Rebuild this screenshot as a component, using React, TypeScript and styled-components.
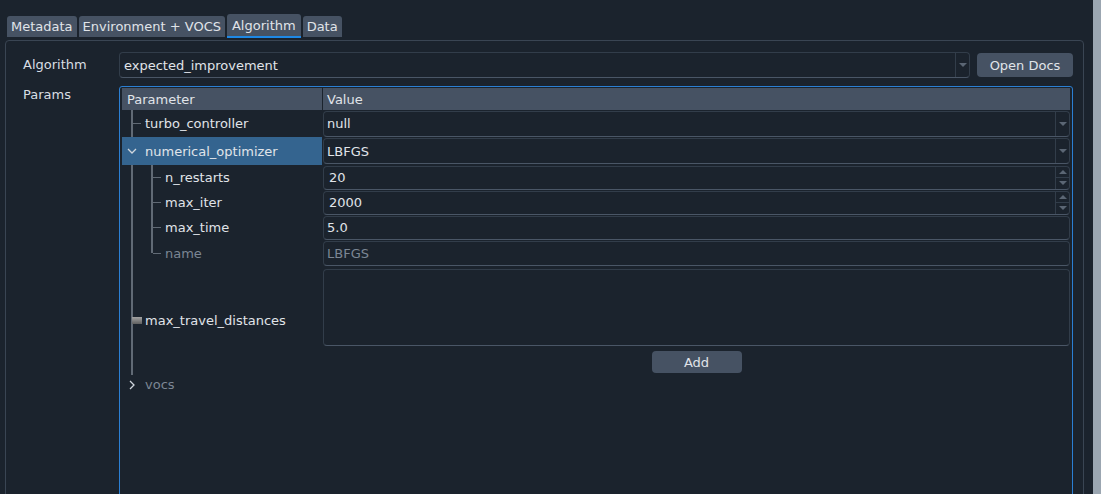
import React from "react";
import styled, { createGlobalStyle, css } from "styled-components";

const bg = "#1b232d";
const text = "#e0e4e9";
const muted = "#7b8694";
const panel = "#465263";
const edge = "#323d4a";
const edgeLow = "#4a5666";
const branch = "#616a75";

const GlobalStyle = createGlobalStyle`
  html, body {
    margin: 0;
    padding: 0;
    overflow: hidden;
    background: ${bg};
  }
  body {
    font-family: "DejaVu Sans", "Liberation Sans", sans-serif;
    font-size: 13px;
    color: ${text};
  }
`;

const Window = styled.div`
  display: flex;
  width: 1101px;
  height: 494px;
  overflow: hidden;
`;

const Main = styled.div`
  flex: 1;
  min-width: 0;
  display: flex;
  flex-direction: column;
  padding: 14px 0 0 5px;
`;

const ScrollStrip = styled.div`
  flex: 0 0 8px;
  background: #9ba6b1;
`;

const TabBar = styled.div`
  display: flex;
  flex-shrink: 0;
  align-items: flex-end;
  gap: 2px;
  height: 26px;
  padding-left: 2px;
`;

const Tab = styled.div<{ $active?: boolean }>`
  display: flex;
  align-items: center;
  padding: 0 4px;
  background: ${panel};
  border-radius: 3px 3px 0 0;
  color: ${text};
  box-sizing: border-box;
  height: 21px;
  margin-bottom: 3px;
  ${({ $active }) =>
    $active &&
    css`
      height: 24px;
      margin-bottom: 2px;
      padding: 0 5px;
      border-bottom: 2px solid #1e88e5;
    `}
`;

const GroupBox = styled.div`
  flex-shrink: 0;
  width: 1079px;
  height: 500px;
  box-sizing: border-box;
  border: 1px solid #3a4553;
  border-radius: 4px;
  padding: 11px 10px 10px 17px;
  display: grid;
  grid-template-columns: 96px 1fr;
  grid-template-rows: 26px 1fr;
  row-gap: 8px;
`;

const FormLabel = styled.div<{ $top?: boolean }>`
  color: #d9dee4;
  line-height: 16px;
  align-self: ${({ $top }) => ($top ? "start" : "center")};
  padding-top: ${({ $top }) => ($top ? 1 : 0)}px;
`;

const AlgorithmRow = styled.div`
  display: flex;
  align-items: center;
  gap: 7px;
`;

const Field = styled.div<{ $h?: number; $grow?: boolean }>`
  box-sizing: border-box;
  flex-shrink: 0;
  height: ${({ $h }) => $h ?? 24}px;
  ${({ $grow }) => $grow && "flex: 1;"}
  border: 1px solid ${edge};
  border-bottom-color: ${edgeLow};
  border-radius: 4px;
  background: ${bg};
  display: flex;
  align-items: center;
`;

const FieldText = styled.span<{ $muted?: boolean; $pad?: number }>`
  flex: 1;
  padding-left: ${({ $pad }) => $pad ?? 3}px;
  color: ${({ $muted }) => ($muted ? muted : text)};
  white-space: nowrap;
`;

const DropButton = styled.span`
  align-self: stretch;
  width: 13px;
  border-left: 1px solid ${edge};
  display: flex;
  align-items: center;
  justify-content: center;
`;

const SpinButtons = styled.span`
  align-self: stretch;
  width: 13px;
  border-left: 1px solid ${edge};
  display: flex;
  flex-direction: column;
`;

const SpinHalf = styled.span`
  flex: 1;
  display: flex;
  align-items: center;
  justify-content: center;
  & + & {
    border-top: 1px solid ${edge};
  }
`;

const Arrow = styled.span<{ $up?: boolean }>`
  width: 0;
  height: 0;
  border-left: 4px solid transparent;
  border-right: 4px solid transparent;
  ${({ $up }) =>
    $up
      ? css`border-bottom: 4px solid #5b6674;`
      : css`border-top: 4px solid #5b6674;`}
`;

const Button = styled.button<{ $w: number; $h: number }>`
  flex-shrink: 0;
  width: ${({ $w }) => $w}px;
  height: ${({ $h }) => $h}px;
  border: none;
  border-radius: 4px;
  background: ${panel};
  color: ${text};
  font: inherit;
  padding: 0;
`;

const Tree = styled.div`
  box-sizing: border-box;
  border: 1px solid #2b7fd3;
  border-radius: 3px;
  padding: 1px 2px 0 2px;
  min-height: 0;
`;

const Header = styled.div`
  display: grid;
  grid-template-columns: 200px 1fr;
  height: 22px;
  background: ${panel};
`;

const HeaderCell = styled.div`
  display: flex;
  align-items: center;
  padding-left: 5px;
  & + & {
    border-left: 1px solid ${bg};
    padding-left: 4px;
  }
`;

const Row = styled.div<{ $h: number }>`
  display: grid;
  grid-template-columns: 200px 1fr;
  height: ${({ $h }) => $h}px;
`;

const ParamCell = styled.div<{ $selected?: boolean }>`
  display: flex;
  align-items: stretch;
  background: ${({ $selected }) => ($selected ? "#34648f" : "transparent")};
`;

const ParamName = styled.span<{ $muted?: boolean }>`
  align-self: center;
  padding-left: 3px;
  color: ${({ $muted }) => ($muted ? muted : text)};
  white-space: nowrap;
`;

const ValueCell = styled.div`
  padding-left: 1px;
  display: flex;
  flex-direction: column;
  justify-content: center;
`;

const ListEditor = styled.div`
  padding-left: 1px;
  padding-top: 3px;
  display: flex;
  flex-direction: column;
  align-items: stretch;
  gap: 5px;
  & > button {
    align-self: center;
  }
`;

type SlotKind = "pipe" | "tee" | "corner" | "square" | "open" | "closed" | "blank";

const vLine = `linear-gradient(${branch}, ${branch})`;

const slotStyles: Record<SlotKind, ReturnType<typeof css> | string> = {
  blank: "",
  open: "",
  closed: "",
  pipe: css`
    background-image: ${vLine};
    background-size: 2px 100%;
    background-position: 9px 0;
  `,
  tee: css`
    background-image: ${vLine}, ${vLine};
    background-size: 2px 100%, 8px 1px;
    background-position: 9px 0, 11px 50%;
  `,
  corner: css`
    background-image: ${vLine}, ${vLine};
    background-size: 2px 50%, 8px 1px;
    background-position: 9px 0, 11px 50%;
  `,
  square: css`
    background-image: linear-gradient(#a3a3a3, #5f5f5f), ${vLine};
    background-size: 10px 7px, 2px 100%;
    background-position: 10px 50%, 9px 0;
  `,
};

const Slot = styled.span<{ $kind: SlotKind }>`
  flex: 0 0 20px;
  display: flex;
  align-items: center;
  justify-content: center;
  background-repeat: no-repeat;
  ${({ $kind }) => slotStyles[$kind]}
`;

const Chevron = ({ open }: { open: boolean }) =>
  open ? (
    <svg width="10" height="6" viewBox="0 0 10 6">
      <path d="M1 1 L5 5 L9 1" fill="none" stroke="#d0d6dd" strokeWidth="1.3" />
    </svg>
  ) : (
    <svg width="6" height="10" viewBox="0 0 6 10">
      <path d="M1 1 L5 5 L1 9" fill="none" stroke="#d0d6dd" strokeWidth="1.3" />
    </svg>
  );

const Combo = ({ value, grow, h }: { value: string; grow?: boolean; h?: number }) => (
  <Field $h={h ?? 26} $grow={grow}>
    <FieldText $pad={grow ? 4 : 3}>{value}</FieldText>
    <DropButton>
      <Arrow />
    </DropButton>
  </Field>
);

const Spin = ({ value }: { value: string }) => (
  <Field>
    <FieldText $pad={5}>{value}</FieldText>
    <SpinButtons>
      <SpinHalf>
        <Arrow $up />
      </SpinHalf>
      <SpinHalf>
        <Arrow />
      </SpinHalf>
    </SpinButtons>
  </Field>
);

const Param = ({
  slots,
  name,
  selected,
  dim,
}: {
  slots: SlotKind[];
  name?: string;
  selected?: boolean;
  dim?: boolean;
}) => (
  <ParamCell $selected={selected}>
    {slots.map((k, i) => (
      <Slot key={i} $kind={k}>
        {k === "open" && <Chevron open />}
        {k === "closed" && <Chevron open={false} />}
      </Slot>
    ))}
    {name && <ParamName $muted={dim}>{name}</ParamName>}
  </ParamCell>
);

export default function App() {
  return (
    <>
      <GlobalStyle />
      <Window>
        <Main>
          <TabBar>
            <Tab>Metadata</Tab>
            <Tab>Environment + VOCS</Tab>
            <Tab $active>Algorithm</Tab>
            <Tab>Data</Tab>
          </TabBar>
          <GroupBox>
            <FormLabel>Algorithm</FormLabel>
            <AlgorithmRow>
              <Combo value="expected_improvement" grow />
              <Button $w={96} $h={24}>Open Docs</Button>
            </AlgorithmRow>
            <FormLabel $top>Params</FormLabel>
            <Tree>
              <Header>
                <HeaderCell>Parameter</HeaderCell>
                <HeaderCell>Value</HeaderCell>
              </Header>
              <Row $h={27}>
                <Param slots={["tee"]} name="turbo_controller" />
                <ValueCell>
                  <Combo value="null" />
                </ValueCell>
              </Row>
              <Row $h={28}>
                <Param slots={["open"]} name="numerical_optimizer" selected />
                <ValueCell>
                  <Combo value="LBFGS" />
                </ValueCell>
              </Row>
              <Row $h={25}>
                <Param slots={["pipe", "tee"]} name="n_restarts" />
                <ValueCell>
                  <Spin value="20" />
                </ValueCell>
              </Row>
              <Row $h={25}>
                <Param slots={["pipe", "tee"]} name="max_iter" />
                <ValueCell>
                  <Spin value="2000" />
                </ValueCell>
              </Row>
              <Row $h={25}>
                <Param slots={["pipe", "tee"]} name="max_time" />
                <ValueCell>
                  <Field>
                    <FieldText>5.0</FieldText>
                  </Field>
                </ValueCell>
              </Row>
              <Row $h={26}>
                <Param slots={["pipe", "corner"]} name="name" dim />
                <ValueCell>
                  <Field $h={25}>
                    <FieldText $muted>LBFGS</FieldText>
                  </Field>
                </ValueCell>
              </Row>
              <Row $h={109}>
                <Param slots={["square"]} name="max_travel_distances" />
                <ListEditor>
                  <Field $h={77} />
                  <Button $w={90} $h={22}>Add</Button>
                </ListEditor>
              </Row>
              <Row $h={19}>
                <Param slots={["closed"]} name="vocs" dim />
                <ValueCell />
              </Row>
            </Tree>
          </GroupBox>
        </Main>
        <ScrollStrip />
      </Window>
    </>
  );
}
